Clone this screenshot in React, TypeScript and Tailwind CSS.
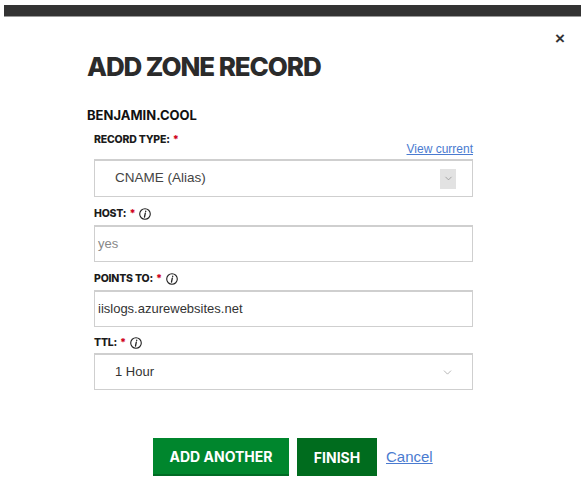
import { ChevronDown } from 'lucide-react';

function InfoIcon() {
  return (
    <svg width="12" height="12" viewBox="0 0 12 12" className="ml-[4px] inline-block">
      <circle cx="6" cy="6" r="5.3" fill="none" stroke="#222" strokeWidth="1.1" />
      <path d="M6.7 3.2 L6.7 3.5 M6.3 5.2 L5.5 9" stroke="#222" strokeWidth="1.3" strokeLinecap="round" />
    </svg>
  );
}

function Label({ text, info }: { text: string; info?: boolean }) {
  return (
    <div className="flex items-center text-[10.5px] font-extrabold text-[#1b1b1b] tracking-[-0.2px] h-[14px]" style={{ fontFamily: 'Inter, sans-serif' }}>
      <span>{text}</span>
      <span className="ml-[3px] text-[#d0021b]">*</span>
      {info && <InfoIcon />}
    </div>
  );
}

export default function App() {
  return (
    <div className="w-[585px] h-[486px] bg-white relative overflow-hidden" style={{ fontFamily: '"Liberation Sans", Arial, sans-serif' }}>
      {/* top bar */}
      <div className="mx-[4px] mt-[5px] h-[12px] bg-[#333333] border-b border-[#9a9a9a]" />

      <button className="absolute right-[20px] top-[30px] text-[#333] text-[17px] font-bold leading-none">×</button>

      <div className="pl-[87px] pt-[35px]">
        <h1 className="text-[26px] font-extrabold text-[#2b2b2b] leading-[30px] tracking-[-1.1px]" style={{ fontFamily: 'Inter, sans-serif' }}>
          ADD ZONE RECORD
        </h1>
        <div className="mt-[25px] text-[13px] font-bold text-[#111] leading-[16px]" style={{ fontFamily: 'Inter, sans-serif' }}>
          BENJAMIN.COOL
        </div>

        <div className="ml-[7px] w-[379px] mt-[10px]">
          <Label text="RECORD TYPE:" />
          <div className="flex justify-end mt-[-5px]">
            <a className="text-[12px] text-[#4a7bd0] underline leading-[14px]">View current</a>
          </div>
          <div className="mt-[3px] h-[38px] border border-[#cfcfcf] border-t-2 flex items-center pl-[20px] pr-[16px] text-[13.5px] text-[#444]">
            <span className="flex-1">CNAME (Alias)</span>
            <span className="w-[16px] h-[20px] bg-[#e2e2e2] flex items-center justify-center">
              <ChevronDown size={11} color="#888" strokeWidth={1.5} />
            </span>
          </div>

          <div className="mt-[10px]">
            <Label text="HOST:" info />
          </div>
          <div className="mt-[4px] h-[37px] border border-[#cfcfcf] border-t-2 flex items-center pl-[3px] text-[13px] text-[#888]">
            yes
          </div>

          <div className="mt-[10px]">
            <Label text="POINTS TO:" info />
          </div>
          <div className="mt-[4px] h-[37px] border border-[#cfcfcf] border-t-2 flex items-center pl-[3px] text-[13px] text-[#333]">
            iislogs.azurewebsites.net
          </div>

          <div className="mt-[9px]">
            <Label text="TTL:" info />
          </div>
          <div className="mt-[3px] h-[37px] border border-[#cfcfcf] border-t-2 flex items-center pl-[20px] pr-[18px] text-[13px] text-[#333]">
            <span className="flex-1">1 Hour</span>
            <ChevronDown size={13} color="#999" strokeWidth={1.3} />
          </div>
        </div>

        <div className="flex items-center mt-[48px] ml-[66px]">
          <button className="h-[38px] w-[136px] bg-[#00862d] text-white text-[14px] font-bold border-b-2 border-[#006b24]" style={{ fontFamily: 'Inter, sans-serif' }}>
            ADD ANOTHER
          </button>
          <button className="ml-[8px] h-[38px] w-[80px] bg-[#006c1e] text-white text-[14px] font-bold" style={{ fontFamily: 'Inter, sans-serif' }}>
            FINISH
          </button>
          <a className="ml-[9px] text-[15px] text-[#4a7bd0] underline">Cancel</a>
        </div>
      </div>
    </div>
  );
}
